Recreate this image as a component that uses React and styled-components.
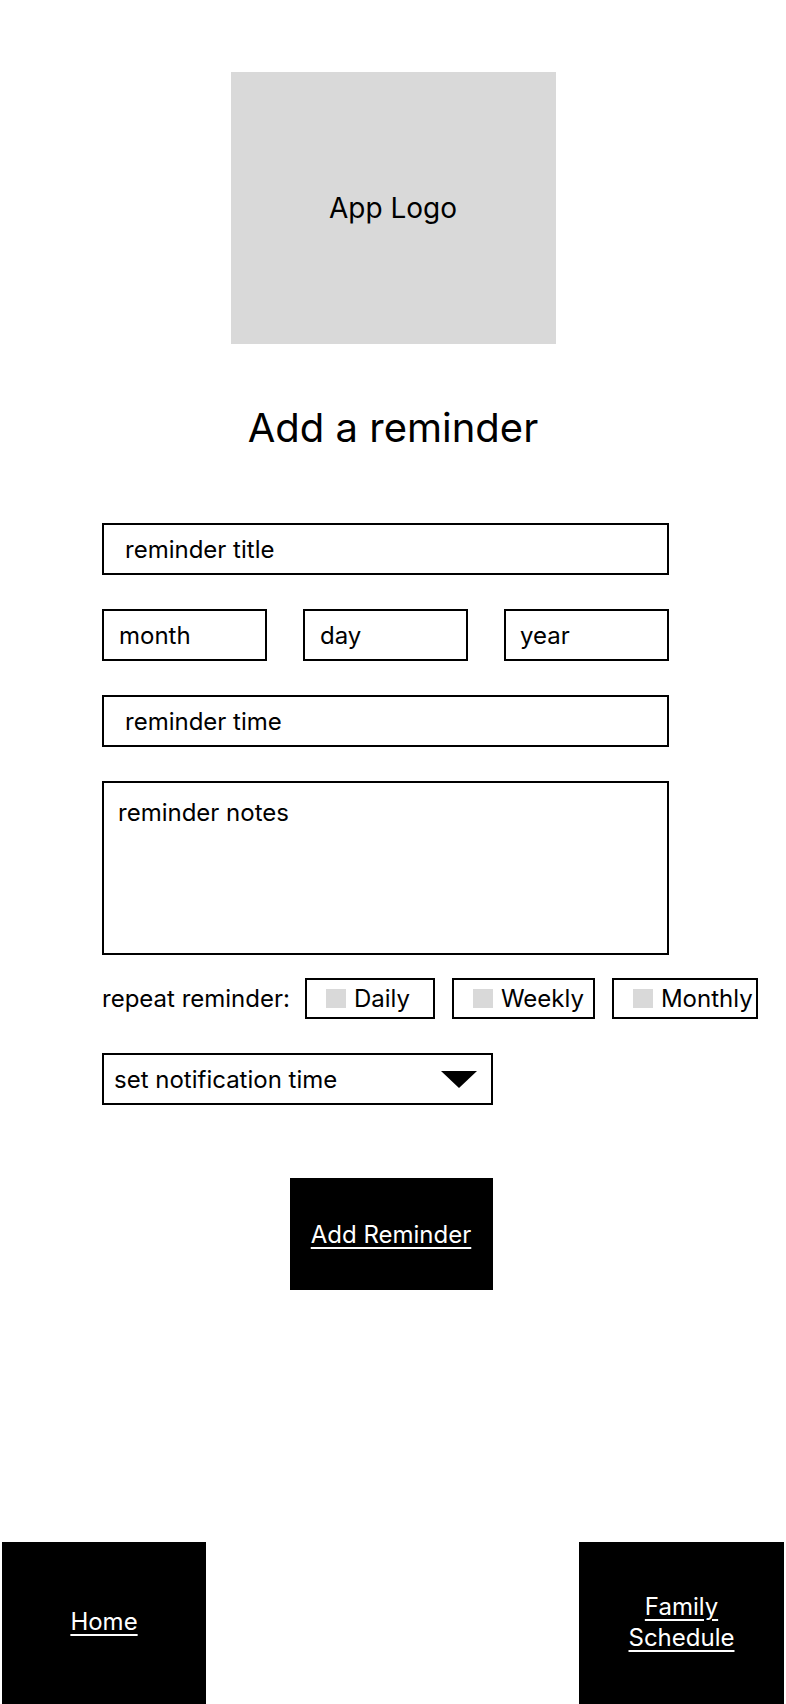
import styled, { createGlobalStyle } from "styled-components";

const GlobalStyle = createGlobalStyle`
  * {
    box-sizing: border-box;
  }
  body {
    margin: 0;
    background: #fff;
    font-family: Inter, "Noto Sans", "Liberation Sans", sans-serif;
    color: #000;
  }
`;

// 전체 페이지
const Page = styled.div`
  display: flex;
  flex-direction: column;
  align-items: center;
  width: 786px;
  height: 1704px;
  padding-top: 72px;
  overflow: hidden;
`;

const Logo = styled.div`
  display: flex;
  justify-content: center;
  align-items: center;
  width: 325px;
  height: 272px;
  background-color: #d9d9d9;
  font-size: 28px;
`;

const Title = styled.h1`
  margin: 60px 0 0 0;
  font-size: 40px;
  font-weight: 400;
  line-height: 48px;
`;

const Form = styled.form`
  display: flex;
  flex-direction: column;
  gap: 34px;
  align-self: flex-start;
  width: 567px;
  margin: 71px 0 0 102px;
`;

const Input = styled.input`
  width: ${(props) => props.width || "100%"};
  height: 52px;
  padding: 0 0 0 ${(props) => props.padLeft || "21px"};
  border: 2px solid #000;
  border-radius: 0;
  font-family: inherit;
  font-size: 24px;
  color: #000;
  background: #fff;
  &::placeholder {
    color: #000;
  }
`;

const DateRow = styled.div`
  display: flex;
  justify-content: space-between;
`;

const Notes = styled.textarea`
  width: 100%;
  height: 174px;
  padding: 15px 14px;
  border: 2px solid #000;
  border-radius: 0;
  font-family: inherit;
  font-size: 24px;
  resize: none;
  &::placeholder {
    color: #000;
  }
`;

const RepeatRow = styled.div`
  display: flex;
  align-items: center;
  gap: 17px;
  margin-top: -11px;
  font-size: 24px;
  white-space: nowrap;
`;

const RepeatLabel = styled.span`
  margin-right: -2px;
`;

const RepeatOption = styled.label`
  display: flex;
  align-items: center;
  flex-shrink: 0;
  gap: 8px;
  width: ${(props) => props.width};
  height: 41px;
  padding-left: 19px;
  border: 2px solid #000;
  font-size: 24px;
`;

const CheckSquare = styled.span`
  display: block;
  width: 20px;
  height: 19px;
  background-color: #d9d9d9;
`;

const SelectBox = styled.div`
  display: flex;
  justify-content: space-between;
  align-items: center;
  width: 391px;
  height: 52px;
  padding: 0 14px 0 10px;
  border: 2px solid #000;
  font-size: 24px;
`;

const BlackButton = styled.button`
  display: flex;
  justify-content: center;
  align-items: center;
  flex-shrink: 0;
  width: ${(props) => props.width || "203px"};
  height: ${(props) => props.height || "112px"};
  padding: 0 0 ${(props) => props.padBottom || "0"} 0;
  border: none;
  background-color: #000;
  color: #fff;
  font-family: inherit;
  font-size: 24px;
  line-height: 31px;
  text-align: center;
  text-decoration: underline;
  text-underline-offset: 4px;
  text-decoration-thickness: 1.5px;
  cursor: pointer;
`;

const SubmitButton = styled(BlackButton)`
  margin-top: 73px;
  margin-right: 4px;
`;

const Footer = styled.nav`
  display: flex;
  justify-content: space-between;
  align-self: stretch;
  margin-top: auto;
  padding: 0 2px;
`;

function App() {
  return (
    <Page>
      <GlobalStyle />
      <Logo>App Logo</Logo>
      <Title>Add a reminder</Title>
      <Form onSubmit={(e) => e.preventDefault()}>
        <Input placeholder="reminder title" />
        <DateRow>
          <Input placeholder="month" width="165px" padLeft="15px" />
          <Input placeholder="day" width="165px" padLeft="15px" />
          <Input placeholder="year" width="165px" padLeft="14px" />
        </DateRow>
        <Input placeholder="reminder time" />
        <Notes placeholder="reminder notes" />
        <RepeatRow>
          <RepeatLabel>repeat reminder:</RepeatLabel>
          <RepeatOption width="130px">
            <CheckSquare />
            Daily
          </RepeatOption>
          <RepeatOption width="143px">
            <CheckSquare />
            Weekly
          </RepeatOption>
          <RepeatOption width="146px">
            <CheckSquare />
            Monthly
          </RepeatOption>
        </RepeatRow>
        <SelectBox>
          set notification time
          <svg width="36" height="17" viewBox="0 0 36 17">
            <polygon points="0,0 36,0 18,17" fill="#000" />
          </svg>
        </SelectBox>
      </Form>
      <SubmitButton type="button">Add Reminder</SubmitButton>
      <Footer>
        <BlackButton type="button" width="204px" height="162px" padBottom="4px">
          Home
        </BlackButton>
        <BlackButton type="button" width="205px" height="162px" padBottom="2px">
          Family
          <br />
          Schedule
        </BlackButton>
      </Footer>
    </Page>
  );
}

export default App;
